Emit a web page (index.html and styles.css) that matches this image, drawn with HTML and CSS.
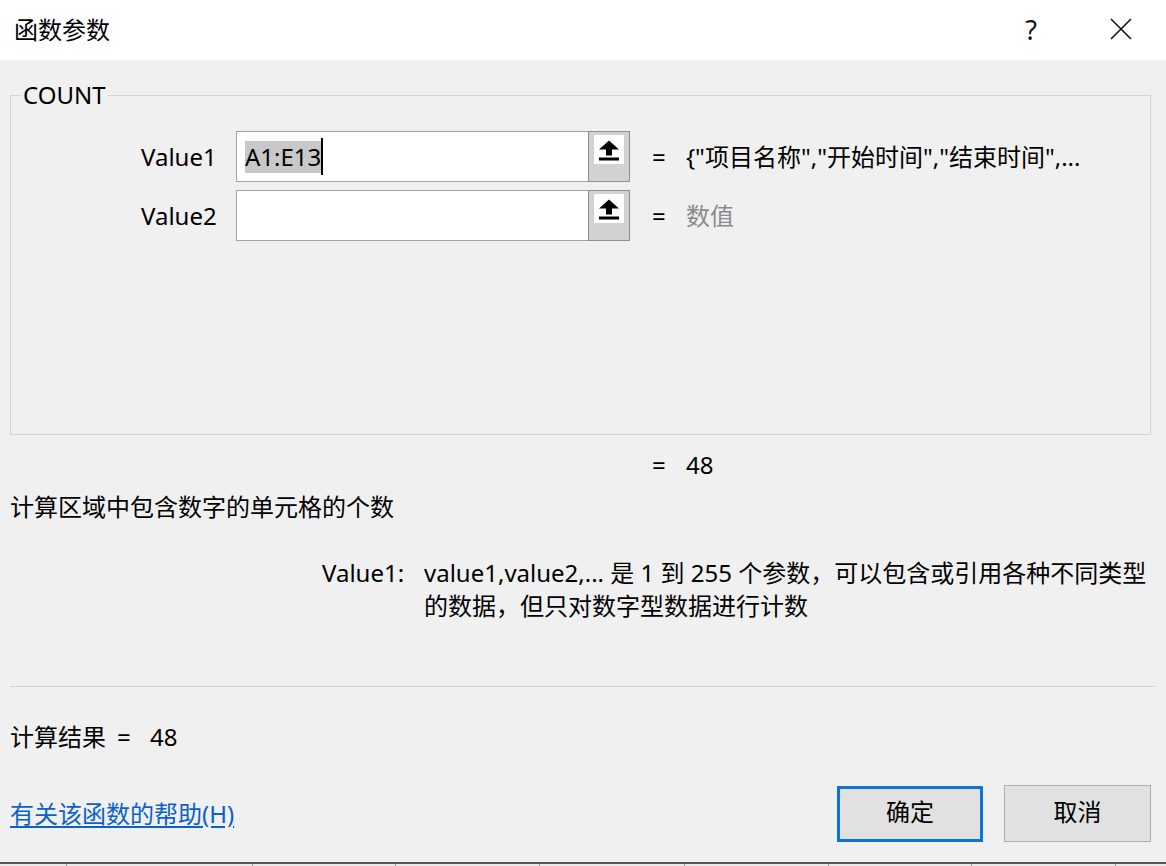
FILE: index.html
```html
<!DOCTYPE html>
<html lang="zh-CN">
<head>
<meta charset="utf-8">
<title>函数参数</title>
<link rel="stylesheet" href="styles.css">
</head>
<body>
<div class="window">
  <div class="titlebar">
    <div class="title">函数参数</div>
    <div class="caption-btns">
      <div class="cbtn help">?</div>
      <div class="cbtn close">
        <svg width="22" height="22" viewBox="0 0 22 22"><path d="M1 1 L21 21 M21 1 L1 21" stroke="#111" stroke-width="1.6" fill="none"/></svg>
      </div>
    </div>
  </div>

  <div class="client">
    <fieldset class="group">
      <legend class="group-title">COUNT</legend>
      <div class="args">
        <div class="arg-row">
          <span class="arg-label">Value1</span>
          <div class="ref-box">
            <div class="ref-input"><span class="sel">A1:E13</span><span class="caret"></span></div>
            <div class="ref-btn"><span class="ref-face"><svg width="30" height="29" viewBox="0 0 30 29"><path d="M15 5.5 L5 14.5 H12 V20.5 H18 V14.5 H25 Z" fill="#000"/><rect x="5" y="22.5" width="20" height="3" fill="#000"/></svg></span></div>
          </div>
          <span class="eq">=</span>
          <span class="arg-val">{"项目名称","开始时间","结束时间",...</span>
        </div>
        <div class="arg-row">
          <span class="arg-label">Value2</span>
          <div class="ref-box">
            <div class="ref-input"></div>
            <div class="ref-btn"><span class="ref-face"><svg width="30" height="29" viewBox="0 0 30 29"><path d="M15 5.5 L5 14.5 H12 V20.5 H18 V14.5 H25 Z" fill="#000"/><rect x="5" y="22.5" width="20" height="3" fill="#000"/></svg></span></div>
          </div>
          <span class="eq">=</span>
          <span class="arg-val hint">数值</span>
        </div>
      </div>
    </fieldset>

    <div class="formula-result"><span class="eq">=</span><span>48</span></div>

    <div class="func-desc">计算区域中包含数字的单元格的个数</div>

    <div class="arg-desc">
      <span class="arg-desc-label">Value1:</span>
      <div class="arg-desc-text">
        <span class="line">value1,value2,... 是 1 到 255 个参数，可以包含或引用各种不同类型</span>
        <span class="line">的数据，但只对数字型数据进行计数</span>
      </div>
    </div>

    <div class="sep"></div>

    <div class="calc-result"><span>计算结果</span><span class="calc-eq">=</span><span>48</span></div>

    <div class="footer">
      <a class="help-link" href="#">有关该函数的帮助(H)</a>
      <div class="buttons">
        <button class="btn btn-default">确定</button>
        <button class="btn">取消</button>
      </div>
    </div>
  </div>

  <div class="sheet-edge">
    <span class="col w67"></span>
    <span class="col w186"></span>
    <span class="col w143"></span>
    <span class="col w144"></span>
    <span class="col w145"></span>
    <span class="col w144"></span>
    <span class="col w143"></span>
    <span class="col w144"></span>
    <span class="col last"></span>
  </div>
</div>
</body>
</html>
```

FILE: styles.css
```css
* { box-sizing: border-box; }
html, body { margin: 0; padding: 0; }
body {
  width: 1166px;
  height: 866px;
  overflow: hidden;
  font-family: "Noto Sans", "Noto Sans CJK SC", sans-serif;
  font-size: 24px;
  color: #000;
  background: #f0f0f0;
}
.window {
  display: flex;
  flex-direction: column;
  height: 866px;
}
.titlebar {
  height: 60px;
  flex: none;
  background: #fff;
  display: flex;
  align-items: center;
  justify-content: space-between;
}
.title {
  padding-left: 14px;
  font-size: 24px;
  line-height: 30px;
}
.caption-btns {
  display: flex;
  height: 60px;
}
.cbtn {
  width: 90px;
  height: 58px;
  display: flex;
  align-items: center;
  justify-content: center;
}
.cbtn.help { font-size: 27px; color: #111; }

.client {
  flex: 1;
  padding: 0 15px 0 10px;
  background: #f0f0f0;
}

.group {
  margin: 21px 0 0 0;
  padding: 0;
  height: 354px;
  border: 1px solid #d4d4d4;
}
.group-title {
  margin-left: 10px;
  padding: 0 2px;
  line-height: 28px;
  font-size: 24px;
}
.args {
  padding: 22px 0 0 130px;
  display: flex;
  flex-direction: column;
  gap: 8px;
}
.arg-row {
  display: grid;
  grid-template-columns: 95px 394px 56px 1fr;
  align-items: center;
  height: 51px;
}
.arg-label { line-height: 30px; }
.ref-box {
  display: flex;
  height: 51px;
}
.ref-input {
  flex: 1;
  background: #fff;
  border: 1px solid #a2a2a2;
  border-right: none;
  padding-left: 8px;
  display: flex;
  align-items: center;
}
.sel {
  background: #c8c8c8;
  line-height: 32px;
  height: 32px;
  display: inline-block;
}
.caret {
  display: inline-block;
  width: 2px;
  height: 37px;
  background: #000;
}
.ref-btn {
  width: 42px;
  background: #d2d2d2;
  border: 1px solid #8f8f8f;
  display: flex;
  align-items: flex-start;
  justify-content: center;
  padding-top: 3px;
}
.ref-face {
  width: 30px;
  height: 29px;
  background: #fff;
  display: block;
}
.ref-face svg { display: block; }
.eq {
  padding-left: 22px;
  line-height: 30px;
}
.arg-val {
  line-height: 30px;
  white-space: nowrap;
}
.arg-val.hint { color: #8a8a8a; }

.formula-result {
  margin-top: 15px;
  padding-left: 642px;
  display: flex;
  line-height: 30px;
}
.formula-result .eq { padding-left: 0; width: 34px; }

.func-desc {
  margin-top: 12px;
  line-height: 30px;
}

.arg-desc {
  margin-top: 34px;
  padding-left: 312px;
  display: flex;
  line-height: 33px;
}
.arg-desc-label {
  width: 102px;
  flex: none;
  white-space: nowrap;
}
.arg-desc-text .line {
  display: block;
  white-space: nowrap;
}

.sep {
  margin-top: 64px;
  margin-right: -4px;
  height: 1px;
  background: #d2d2d2;
}

.calc-result {
  margin-top: 35px;
  line-height: 30px;
  display: flex;
}
.calc-eq { margin-left: 11px; width: 33px; }

.footer {
  margin-top: 33px;
  display: flex;
  align-items: center;
  justify-content: space-between;
}
.help-link {
  color: #0a62c8;
  text-decoration: underline;
  text-underline-offset: 3px;
  line-height: 30px;
}
.buttons {
  display: flex;
  gap: 21px;
  align-items: center;
}
.btn {
  font-family: "Noto Sans", "Noto Sans CJK SC", sans-serif;
  font-size: 24px;
  line-height: 28px;
  color: #000;
  width: 147px;
  height: 57px;
  background: #e1e1e1;
  border: 1px solid #adadad;
  padding: 0 0 3px 0;
}
.btn-default {
  width: 146px;
  height: 56px;
  border: 3px solid #0a74da;
}

.sheet-edge {
  height: 4px;
  flex: none;
  display: flex;
  border-top: 2px solid #575757;
  background: #e9e9e9;
}
.col { height: 2px; border-right: 1px solid #9a9a9a; flex: none; }
.col.last { flex: 1; border-right: none; }
.w67 { width: 67px; }
.w186 { width: 186px; }
.w143 { width: 143px; }
.w144 { width: 144px; }
.w145 { width: 145px; }
```
